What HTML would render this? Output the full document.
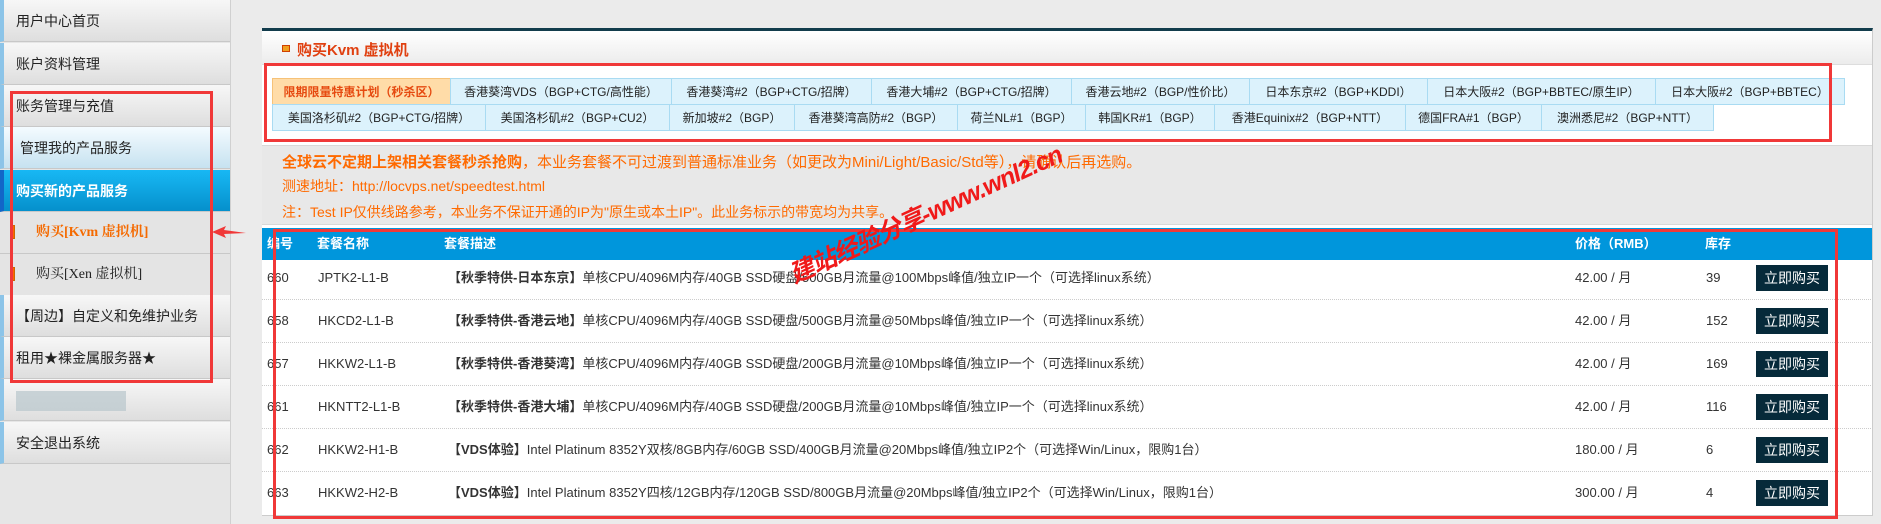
<!DOCTYPE html>
<html><head><meta charset="utf-8"><style>
*{margin:0;padding:0;box-sizing:border-box}
body{width:1881px;height:524px;overflow:hidden;background:#ebebeb;font-family:"Liberation Sans","Noto Sans CJK SC",sans-serif;position:relative;color:#333}
.a{position:absolute}
.side{left:0;top:0;width:231px;height:524px;background:#e6e6e6;border-right:1px solid #d0d0d0}
.it{position:absolute;left:0;width:230px;height:42px;background:linear-gradient(#f7f7f7,#dedede);border-bottom:1px solid #c8c8c8;border-left:4px solid #8cc4e8;font-size:14px;line-height:42px;padding-left:12px;color:#222;white-space:nowrap;overflow:hidden}
.sub{background:#e4e4e4;border-left:none;padding-left:36px;font-family:"Liberation Serif","Noto Serif CJK SC",serif}
.mk{position:absolute;left:10px;top:13px;width:5px;height:14px;background:linear-gradient(90deg,#ff3300,#ffcc00,#ff3300);border:1px solid #c60}
.panel{left:262px;top:28px;width:1611px;height:488px;background:#fff;border-top:3px solid #123c4c;border-right:1px solid #ccc;border-bottom:1px solid #ccc}
.tab{position:absolute;height:27px;line-height:26px;font-size:12px;background:#dcf2fc;border:1px solid #a9dbf2;text-align:center;color:#222;white-space:nowrap;overflow:hidden}
.row{position:absolute;left:262px;width:1611px;height:43px;border-bottom:1px dotted #ccc;font-size:13px;line-height:42px}
.row span{position:absolute}
.btn{position:absolute;left:1494px;top:8px;width:72px;height:26px;background:#062a3a;color:#fff;font-size:14px;line-height:26px;text-align:center}
.rb{position:absolute;border:3px solid #f03838}
</style></head><body>
<div class="a side">
<div class="it" style="top:0">用户中心首页</div>
<div class="it" style="top:43px">账户资料管理</div>
<div class="it" style="top:85px">账务管理与充值</div>
<div class="it" style="top:127px;background:linear-gradient(#f4fbff,#c6e2f0);padding-left:16px">管理我的产品服务</div>
<div class="it" style="top:170px;background:linear-gradient(#18b8f4,#0590cc);color:#fff;font-weight:bold;border-left-color:#1266c8;height:42px">购买新的产品服务</div>
<div class="it sub" style="top:212px;color:#f56a00;font-weight:bold"><span class="mk"></span>购买[Kvm 虚拟机]</div>
<div class="it sub" style="top:254px"><span class="mk"></span>购买[Xen 虚拟机]</div>
<div class="it" style="top:295px">【周边】自定义和免维护业务</div>
<div class="it" style="top:337px">租用★裸金属服务器★</div>
<div class="it" style="top:379px"><span style="display:inline-block;width:110px;height:20px;background:#b8c6cc;vertical-align:middle;opacity:.7"></span></div>
<div class="it" style="top:422px">安全退出系统</div>
</div>
<div class="rb" style="left:10px;top:91px;width:203px;height:292px"></div>
<svg class="a" style="left:210px;top:224px" width="40" height="16"><polygon points="2,8 16,2 14,6 36,9 14,10 16,14" fill="#f03838"/></svg>

<div class="a panel">
<div class="a" style="left:0;top:0;width:100%;height:34px;background:linear-gradient(#fff,#ececec);border-bottom:1px solid #ddd"></div>
<div class="a" style="left:20px;top:14px;width:8px;height:7px;background:#f0a020;border:1px solid #d04000"></div>
<div class="a" style="left:35px;top:8px;font-size:15px;font-weight:bold;color:#e04010">购买Kvm 虚拟机</div>
<div class="a" style="left:0;top:114px;width:100%;height:80px;background:#e8e8e8;border-top:1px solid #d8d8d8;border-bottom:1px solid #d8d8d8"></div>
<div class="a" style="left:20px;top:120px;font-size:15px;color:#ff6a00;white-space:nowrap"><b>全球云不定期上架相关套餐秒杀抢购</b>，本业务套餐不可过渡到普通标准业务（如更改为Mini/Light/Basic/Std等），请确认后再选购。</div>
<div class="a" style="left:20px;top:145px;font-size:14px;color:#ff6a00">测速地址：http://locvps.net/speedtest.html</div>
<div class="a" style="left:20px;top:171px;font-size:14px;color:#ff6a00;white-space:nowrap">注：Test IP仅供线路参考，本业务不保证开通的IP为"原生或本土IP"。此业务标示的带宽均为共享。</div>
<div class="a" style="left:0;top:197px;width:100%;height:32px;background:#0096dc;color:#fff;font-weight:bold;font-size:13px;line-height:32px">
<span class="a" style="left:5px">编号</span><span class="a" style="left:55px">套餐名称</span><span class="a" style="left:182px">套餐描述</span><span class="a" style="left:1313px">价格（RMB）</span><span class="a" style="left:1443px">库存</span></div>
</div>

<div class="tab" style="left:272px;top:78px;width:179px;background:#ffdca8;border-color:#f6c278;color:#e64a10;font-weight:bold">限期限量特惠计划（秒杀区）</div>
<div class="tab" style="left:450px;top:78px;width:222px">香港葵湾VDS（BGP+CTG/高性能）</div>
<div class="tab" style="left:671px;top:78px;width:201px">香港葵湾#2（BGP+CTG/招牌）</div>
<div class="tab" style="left:871px;top:78px;width:201px">香港大埔#2（BGP+CTG/招牌）</div>
<div class="tab" style="left:1071px;top:78px;width:179px">香港云地#2（BGP/性价比）</div>
<div class="tab" style="left:1249px;top:78px;width:179px">日本东京#2（BGP+KDDI）</div>
<div class="tab" style="left:1427px;top:78px;width:229px">日本大阪#2（BGP+BBTEC/原生IP）</div>
<div class="tab" style="left:1655px;top:78px;width:190px">日本大阪#2（BGP+BBTEC）</div>
<div class="tab" style="left:272px;top:104px;width:214px">美国洛杉矶#2（BGP+CTG/招牌）</div>
<div class="tab" style="left:485px;top:104px;width:185px">美国洛杉矶#2（BGP+CU2）</div>
<div class="tab" style="left:669px;top:104px;width:126px">新加坡#2（BGP）</div>
<div class="tab" style="left:794px;top:104px;width:164px">香港葵湾高防#2（BGP）</div>
<div class="tab" style="left:957px;top:104px;width:129px">荷兰NL#1（BGP）</div>
<div class="tab" style="left:1085px;top:104px;width:130px">韩国KR#1（BGP）</div>
<div class="tab" style="left:1214px;top:104px;width:192px">香港Equinix#2（BGP+NTT）</div>
<div class="tab" style="left:1405px;top:104px;width:137px">德国FRA#1（BGP）</div>
<div class="tab" style="left:1541px;top:104px;width:173px">澳洲悉尼#2（BGP+NTT）</div>
<div class="rb" style="left:264px;top:63px;width:1568px;height:79px"></div>

<div class="row" style="top:257px"><span style="left:5px">660</span><span style="left:56px">JPTK2-L1-B</span><span style="left:186px"><b>【秋季特供-日本东京】</b>单核CPU/4096M内存/40GB SSD硬盘/500GB月流量@100Mbps峰值/独立IP一个（可选择linux系统）</span><span style="left:1313px">42.00 / 月</span><span style="left:1444px">39</span><div class="btn">立即购买</div></div>
<div class="row" style="top:300px"><span style="left:5px">658</span><span style="left:56px">HKCD2-L1-B</span><span style="left:186px"><b>【秋季特供-香港云地】</b>单核CPU/4096M内存/40GB SSD硬盘/500GB月流量@50Mbps峰值/独立IP一个（可选择linux系统）</span><span style="left:1313px">42.00 / 月</span><span style="left:1444px">152</span><div class="btn">立即购买</div></div>
<div class="row" style="top:343px"><span style="left:5px">657</span><span style="left:56px">HKKW2-L1-B</span><span style="left:186px"><b>【秋季特供-香港葵湾】</b>单核CPU/4096M内存/40GB SSD硬盘/200GB月流量@10Mbps峰值/独立IP一个（可选择linux系统）</span><span style="left:1313px">42.00 / 月</span><span style="left:1444px">169</span><div class="btn">立即购买</div></div>
<div class="row" style="top:386px"><span style="left:5px">661</span><span style="left:56px">HKNTT2-L1-B</span><span style="left:186px"><b>【秋季特供-香港大埔】</b>单核CPU/4096M内存/40GB SSD硬盘/200GB月流量@10Mbps峰值/独立IP一个（可选择linux系统）</span><span style="left:1313px">42.00 / 月</span><span style="left:1444px">116</span><div class="btn">立即购买</div></div>
<div class="row" style="top:429px"><span style="left:5px">662</span><span style="left:56px">HKKW2-H1-B</span><span style="left:186px"><b>【VDS体验】</b>Intel Platinum 8352Y双核/8GB内存/60GB SSD/400GB月流量@20Mbps峰值/独立IP2个（可选择Win/Linux，限购1台）</span><span style="left:1313px">180.00 / 月</span><span style="left:1444px">6</span><div class="btn">立即购买</div></div>
<div class="row" style="top:472px;border-bottom:none"><span style="left:5px">663</span><span style="left:56px">HKKW2-H2-B</span><span style="left:186px"><b>【VDS体验】</b>Intel Platinum 8352Y四核/12GB内存/120GB SSD/800GB月流量@20Mbps峰值/独立IP2个（可选择Win/Linux，限购1台）</span><span style="left:1313px">300.00 / 月</span><span style="left:1444px">4</span><div class="btn">立即购买</div></div>
<div class="rb" style="left:273px;top:229px;width:1565px;height:290px"></div>

<div class="a" style="left:770px;top:195px;width:310px;text-align:center;transform:rotate(-24.5deg);font-size:25px;font-weight:bold;font-style:italic;color:#f01a1a;white-space:nowrap;letter-spacing:-1px">建站经验分享-www.wnl2.cn</div>
</body></html>
